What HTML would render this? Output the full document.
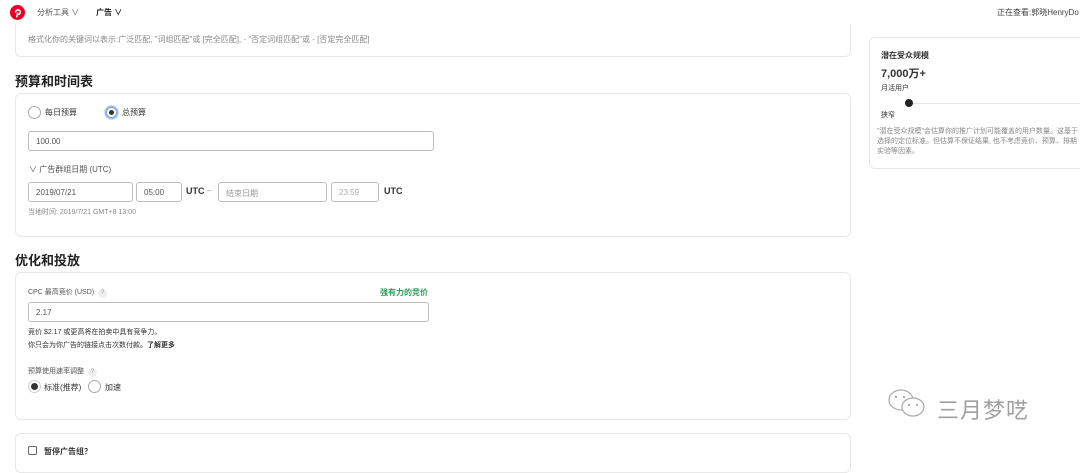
<!DOCTYPE html>
<html><head><meta charset="utf-8"><style>
*{margin:0;padding:0;box-sizing:border-box}
body{width:1080px;height:457px;overflow:hidden;background:#fff;font-family:"Liberation Sans","Noto Sans CJK SC",sans-serif;color:#333;position:relative;font-size:8px}
.a{position:absolute;white-space:nowrap}
.card{position:absolute;border:1px solid #e8e8e8;border-radius:6px;background:#fff}
.inp{position:absolute;border:1px solid #bdbdbd;border-radius:3px;height:20px;font-size:8px;color:#555;padding:5px 7px}
.h{font-size:13px;font-weight:bold;color:#222}
.g{color:#888}
.rad{position:absolute;width:13px;height:13px;border:1px solid #aaa;border-radius:50%;background:#fff}
.q{display:inline-block;width:9px;height:9px;border-radius:50%;background:#eee;color:#999;font-size:6px;text-align:center;line-height:9px;margin-left:4px}
</style></head><body>
<div class="card" style="left:15px;top:24px;width:836px;height:33px;border-top:none;border-radius:0 0 6px 6px"></div>
<svg class="a" style="left:10px;top:5px" width="15" height="15" viewBox="0 0 16 16"><circle cx="8" cy="8" r="8" fill="#e60023"/><path d="M7.2 12.5l1-4M6 7.5a2.5 2.5 0 1 1 4 2.2c-.8.6-2 .3-2-.8" stroke="#fff" stroke-width="1.6" fill="none" stroke-linecap="round"/></svg>
<div class="a" style="left:37px;top:7px;font-size:8px;color:#555">分析工具 ∨</div>
<div class="a" style="left:96px;top:7px;font-size:8px;color:#222;font-weight:bold">广告 ∨</div>
<div class="a" style="left:997px;top:7px;font-size:8px;color:#444">正在查看:郭晓HenryDo</div>

<div class="a g" style="left:28px;top:34px;font-size:8px">格式化你的关键词以表示:广泛匹配, "词组匹配"或 [完全匹配], - "否定词组匹配"或 - [否定完全匹配]</div>

<div class="a h" style="left:15px;top:71px">预算和时间表</div>
<div class="card" style="left:15px;top:93px;width:836px;height:144px"></div>
<div class="rad" style="left:28px;top:106px"></div>
<div class="a" style="left:45px;top:107px">每日预算</div>
<div class="rad" style="left:105px;top:106px;border:2px solid #8ab4e8;box-shadow:0 0 0 1px #cfe0f5"><div style="position:absolute;left:2px;top:2px;width:5px;height:5px;border-radius:50%;background:#333"></div></div>
<div class="a" style="left:122px;top:107px">总预算</div>
<div class="inp" style="left:28px;top:131px;width:406px">100.00</div>
<div class="a" style="left:29px;top:164px;color:#555">∨ 广告群组日期 (UTC)</div>
<div class="inp" style="left:28px;top:182px;width:105px">2019/07/21</div>
<div class="inp" style="left:136px;top:182px;width:46px">05:00</div>
<div class="a" style="left:186px;top:186px;font-weight:bold;font-size:9px">UTC</div>
<div class="a g" style="left:207px;top:186px">–</div>
<div class="inp" style="left:218px;top:182px;width:109px;color:#999">结束日期</div>
<div class="inp" style="left:331px;top:182px;width:48px;color:#aaa">23:59</div>
<div class="a" style="left:384px;top:186px;font-weight:bold;font-size:9px">UTC</div>
<div class="a g" style="left:28px;top:207px;font-size:7px">当地时间: 2019/7/21 GMT+8 13:00</div>

<div class="a h" style="left:15px;top:250px">优化和投放</div>
<div class="card" style="left:15px;top:272px;width:836px;height:148px"></div>
<div class="a" style="left:28px;top:287px;color:#555;font-size:7px">CPC 最高竞价 (USD)<span class="q">?</span></div>
<div class="a" style="left:380px;top:287px;color:#2e9e5b;font-size:8px;font-weight:bold">强有力的竞价</div>
<div class="inp" style="left:28px;top:302px;width:401px">2.17</div>
<div class="a" style="left:28px;top:327px;font-size:7px">竞价 $2.17 或更高将在拍卖中具有竞争力。</div>
<div class="a" style="left:28px;top:340px;font-size:7px">你只会为你广告的链接点击次数付款。<b>了解更多</b></div>
<div class="a" style="left:28px;top:366px;color:#555;font-size:7px">预算使用速率调整<span class="q">?</span></div>
<div class="rad" style="left:28px;top:380px;border:1px solid #ccc"><div style="position:absolute;left:2px;top:2px;width:7px;height:7px;border-radius:50%;background:#333"></div></div>
<div class="a" style="left:44px;top:382px">标准(推荐)</div>
<div class="rad" style="left:88px;top:380px"></div>
<div class="a" style="left:105px;top:382px">加速</div>

<div class="card" style="left:15px;top:433px;width:836px;height:40px"></div>
<div class="a" style="left:28px;top:446px;width:9px;height:9px;border:1px solid #666;border-radius:2px"></div>
<div class="a" style="left:44px;top:446px;font-weight:bold">暂停广告组？</div>

<div class="card" style="left:869px;top:37px;width:220px;height:132px"></div>
<div class="a" style="left:881px;top:50px;font-weight:bold;font-size:8px">潜在受众规模</div>
<div class="a" style="left:881px;top:65px;font-weight:bold;font-size:11px">7,000万+</div>
<div class="a" style="left:881px;top:83px;font-size:7px">月活用户</div>
<div class="a" style="left:910px;top:103px;width:170px;height:1px;background:#e5e5e5"></div>
<div class="a" style="left:905px;top:99px;width:8px;height:8px;border-radius:50%;background:#222"></div>
<div class="a" style="left:881px;top:110px;font-size:7px">狭窄</div>
<div class="a g" style="left:877px;top:127px;font-size:7px;line-height:10px">"潜在受众规模"会估算你的推广计划可能覆盖的用户数量。这基于<br>选择的定位标准。但估算不保证结果, 也不考虑竞价、预算、排期<br>实验等因素。</div>

<svg class="a" style="left:885px;top:387px" width="46" height="36" viewBox="0 0 46 36"><ellipse cx="16" cy="13" rx="12" ry="10" fill="#fff" stroke="#aaa" stroke-width="1.2"/><ellipse cx="28" cy="20" rx="11" ry="9" fill="#fff" stroke="#aaa" stroke-width="1.2"/><circle cx="11" cy="10" r="1.2" fill="#aaa"/><circle cx="19" cy="10" r="1.2" fill="#aaa"/><circle cx="24" cy="18" r="1.1" fill="#aaa"/><circle cx="32" cy="18" r="1.1" fill="#aaa"/></svg>
<div class="a" style="left:937px;top:393px;font-size:22px;color:#a0a0a0;letter-spacing:1px">三月梦呓</div>
</body></html>
